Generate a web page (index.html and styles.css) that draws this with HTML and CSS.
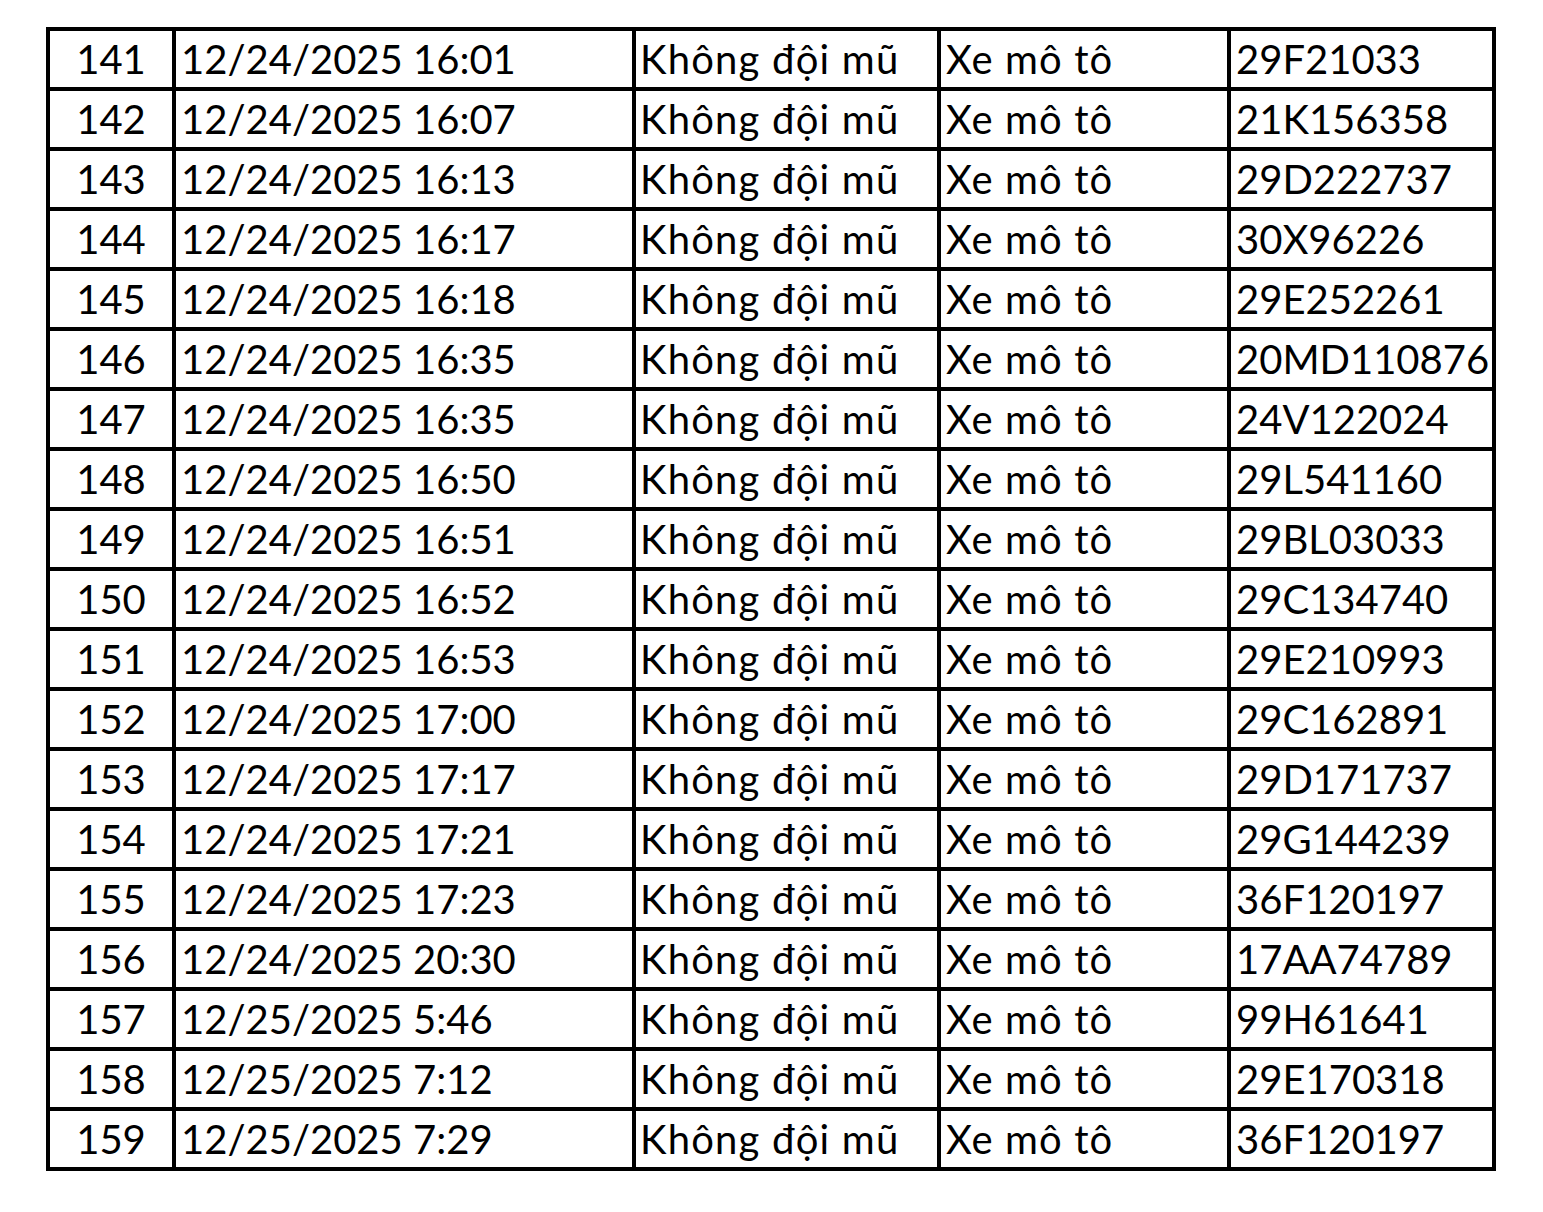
FILE: index.html
```html
<!DOCTYPE html>
<html lang="vi">
<head>
<meta charset="utf-8">
<title>Danh sách vi phạm</title>
<link rel="stylesheet" href="styles.css">
</head>
<body>
<table class="grid">
<tbody>
<tr><td class="c1">141</td><td class="c2">12/24/2025 16:01</td><td class="c3">Không đội mũ</td><td class="c4">Xe mô tô</td><td class="c5">29F21033</td></tr>
<tr><td class="c1">142</td><td class="c2">12/24/2025 16:07</td><td class="c3">Không đội mũ</td><td class="c4">Xe mô tô</td><td class="c5">21K156358</td></tr>
<tr><td class="c1">143</td><td class="c2">12/24/2025 16:13</td><td class="c3">Không đội mũ</td><td class="c4">Xe mô tô</td><td class="c5">29D222737</td></tr>
<tr><td class="c1">144</td><td class="c2">12/24/2025 16:17</td><td class="c3">Không đội mũ</td><td class="c4">Xe mô tô</td><td class="c5">30X96226</td></tr>
<tr><td class="c1">145</td><td class="c2">12/24/2025 16:18</td><td class="c3">Không đội mũ</td><td class="c4">Xe mô tô</td><td class="c5">29E252261</td></tr>
<tr><td class="c1">146</td><td class="c2">12/24/2025 16:35</td><td class="c3">Không đội mũ</td><td class="c4">Xe mô tô</td><td class="c5">20MD110876</td></tr>
<tr><td class="c1">147</td><td class="c2">12/24/2025 16:35</td><td class="c3">Không đội mũ</td><td class="c4">Xe mô tô</td><td class="c5">24V122024</td></tr>
<tr><td class="c1">148</td><td class="c2">12/24/2025 16:50</td><td class="c3">Không đội mũ</td><td class="c4">Xe mô tô</td><td class="c5">29L541160</td></tr>
<tr><td class="c1">149</td><td class="c2">12/24/2025 16:51</td><td class="c3">Không đội mũ</td><td class="c4">Xe mô tô</td><td class="c5">29BL03033</td></tr>
<tr><td class="c1">150</td><td class="c2">12/24/2025 16:52</td><td class="c3">Không đội mũ</td><td class="c4">Xe mô tô</td><td class="c5">29C134740</td></tr>
<tr><td class="c1">151</td><td class="c2">12/24/2025 16:53</td><td class="c3">Không đội mũ</td><td class="c4">Xe mô tô</td><td class="c5">29E210993</td></tr>
<tr><td class="c1">152</td><td class="c2">12/24/2025 17:00</td><td class="c3">Không đội mũ</td><td class="c4">Xe mô tô</td><td class="c5">29C162891</td></tr>
<tr><td class="c1">153</td><td class="c2">12/24/2025 17:17</td><td class="c3">Không đội mũ</td><td class="c4">Xe mô tô</td><td class="c5">29D171737</td></tr>
<tr><td class="c1">154</td><td class="c2">12/24/2025 17:21</td><td class="c3">Không đội mũ</td><td class="c4">Xe mô tô</td><td class="c5">29G144239</td></tr>
<tr><td class="c1">155</td><td class="c2">12/24/2025 17:23</td><td class="c3">Không đội mũ</td><td class="c4">Xe mô tô</td><td class="c5">36F120197</td></tr>
<tr><td class="c1">156</td><td class="c2">12/24/2025 20:30</td><td class="c3">Không đội mũ</td><td class="c4">Xe mô tô</td><td class="c5">17AA74789</td></tr>
<tr><td class="c1">157</td><td class="c2">12/25/2025 5:46</td><td class="c3">Không đội mũ</td><td class="c4">Xe mô tô</td><td class="c5">99H61641</td></tr>
<tr><td class="c1">158</td><td class="c2">12/25/2025 7:12</td><td class="c3">Không đội mũ</td><td class="c4">Xe mô tô</td><td class="c5">29E170318</td></tr>
<tr><td class="c1">159</td><td class="c2">12/25/2025 7:29</td><td class="c3">Không đội mũ</td><td class="c4">Xe mô tô</td><td class="c5">36F120197</td></tr>
</tbody>
</table>
</body>
</html>
```
FILE: styles.css
```css
html, body {
  margin: 0;
  padding: 0;
  background: #ffffff;
}

body {
  padding: 27px 0 0 46px;
  font-family: Lato, "Open Sans", "Noto Sans", sans-serif;
  color: #000000;
}

.grid {
  border-collapse: separate;
  border-spacing: 0;
  table-layout: fixed;
  width: 1450px;
  border-top: 4px solid #000;
  border-left: 4px solid #000;
}

.grid td {
  box-sizing: border-box;
  height: 60px;
  padding: 0 0 0 5px;
  border-right: 4px solid #000;
  border-bottom: 4px solid #000;
  font-size: 40px;
  line-height: 56px;
  white-space: nowrap;
  vertical-align: middle;
}

.grid td.c1 { width: 126px; text-align: center; padding-left: 0; }
.grid td.c2 { width: 460px; }
.grid td.c3 { width: 305px; padding-left: 4px; letter-spacing: 1.2px; }
.grid td.c4 { width: 290px; letter-spacing: 1.1px; }
.grid td.c5 { width: 265px; }
```
